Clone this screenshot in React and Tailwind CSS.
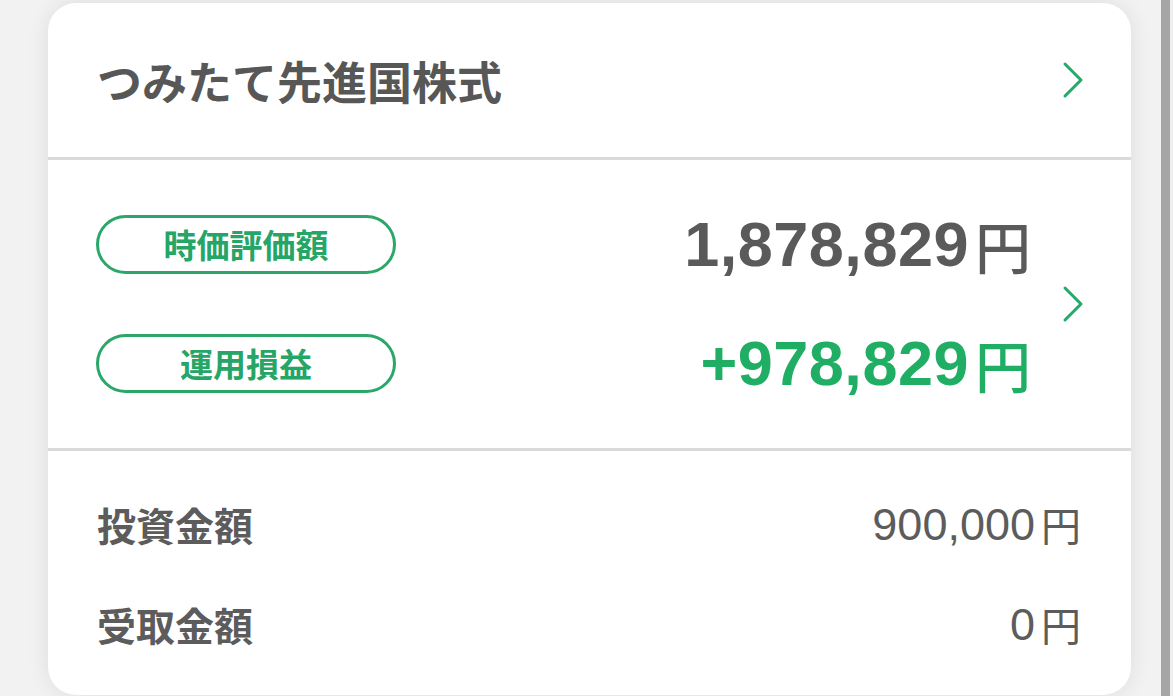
const JP = "font-['Noto_Sans_CJK_JP',sans-serif]";
const NUM = "font-['Liberation_Sans','Noto_Sans_CJK_JP',sans-serif]";

const Chevron = () => (
  <svg width="22" height="38" viewBox="0 0 22 38" fill="none">
    <polyline
      points="3,3 19,19 3,35"
      stroke="#26a866"
      strokeWidth="3"
      strokeLinecap="round"
      strokeLinejoin="round"
    />
  </svg>
);

const Pill = ({ label }) => (
  <div
    className={`${JP} flex h-[59px] w-[300px] items-center justify-center rounded-full border-[3px] border-[#2aa769] text-[33px] font-bold leading-none text-[#25a566]`}
  >
    {label}
  </div>
);

const BigAmount = ({ value, green }) => (
  <div
    className={`flex h-[59px] items-center justify-end leading-none ${
      green ? "text-[#1fae64]" : "text-[#5a5a5a]"
    }`}
  >
    <span className={`${NUM} text-[63px] font-bold tracking-[0.5px]`}>{value}</span>
    <span className={`${JP} ml-[6px] text-[56px] font-medium`}>円</span>
  </div>
);

const Row = ({ label, value }) => (
  <div className="flex h-[100px] items-center justify-between text-[#5c5c5c]">
    <span className={`${JP} text-[39px] font-bold leading-none`}>{label}</span>
    <span className="flex items-center leading-none">
      <span className={`${NUM} text-[45px] font-normal`}>{value}</span>
      <span className={`${JP} ml-[6px] text-[40px] font-normal`}>円</span>
    </span>
  </div>
);

export default function App() {
  return (
    <div className="flex h-[696px] w-full overflow-hidden bg-[#f2f2f2]">
      <div className="mb-[1px] ml-[48px] mt-[3px] flex w-[1083px] shrink-0 flex-col rounded-[28px] bg-white shadow-[0_0_22px_rgba(0,0,0,0.09)]">
        {/* header */}
        <div className="flex h-[154px] items-center justify-between pl-[49px] pr-[47px]">
          <h1 className={`${JP} text-[45px] font-bold leading-none text-[#575757]`}>
            つみたて先進国株式
          </h1>
          <Chevron />
        </div>
        <div className="h-[3px] bg-[#dadada]" />

        {/* valuation */}
        <div className="flex h-[288px] items-center pl-[48px] pr-[47px]">
          <div className="flex flex-col gap-[60px]">
            <Pill label="時価評価額" />
            <Pill label="運用損益" />
          </div>
          <div className="flex flex-1 flex-col gap-[60px]">
            <BigAmount value="1,878,829" />
            <BigAmount value="+978,829" green />
          </div>
          <div className="ml-[31px]">
            <Chevron />
          </div>
        </div>
        <div className="h-[3px] bg-[#dadada]" />

        {/* totals */}
        <div className="flex flex-col pl-[49px] pr-[50px] pt-[23px]">
          <Row label="投資金額" value="900,000" />
          <Row label="受取金額" value="0" />
        </div>
      </div>
      <div className="ml-[30px] w-[9px] shrink-0 self-stretch bg-[#a6a6a6]" />
      <div className="flex-1 bg-[#efefef]" />
    </div>
  );
}
